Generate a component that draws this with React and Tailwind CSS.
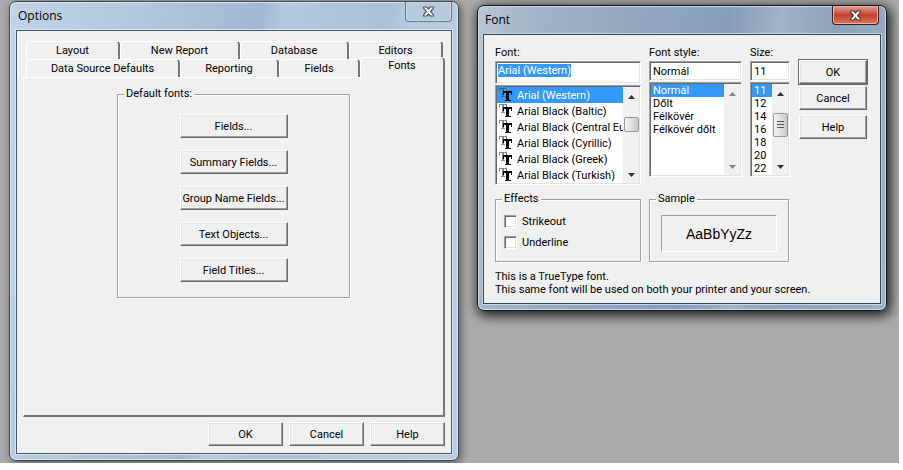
import { useEffect, useRef } from 'react';

const RAISED =
  'border border-t-white border-l-white border-r-[#696969] border-b-[#696969] shadow-[inset_-1px_-1px_0_#a0a0a0,inset_1px_1px_0_#e3e3e3]';
const SUNKEN =
  'border border-t-[#a0a0a0] border-l-[#a0a0a0] border-r-white border-b-white shadow-[inset_1px_1px_0_#696969,inset_-1px_-1px_0_#e3e3e3]';

function PushButton({ children, className = '' }) {
  return (
    <button type="button" className={`flex h-6 items-center justify-center whitespace-nowrap bg-[#f0f0f0] ${RAISED} ${className}`}>
      {children}
    </button>
  );
}

function Group({ title, className = '', children }) {
  return (
    <fieldset className={`min-w-0 border border-[#a0a0a0] shadow-[inset_1px_1px_0_#fff,1px_1px_0_#fff] ${className}`}>
      <legend className="ml-1.5 bg-[#f0f0f0] px-0.5 leading-3">{title}</legend>
      {children}
    </fieldset>
  );
}

function CloseGlyph({ outline }) {
  return (
    <svg width="13" height="11" viewBox="0 0 13 11" aria-hidden="true">
      <path
        d="M1.500 1h3.200l1.800 2 1.800-2h3.200v1.200L8.600 5.500l2.900 3.300V10H8.300L6.500 8 4.700 10H1.500V8.800L4.400 5.500 1.500 2.200Z"
        fill="#fff"
        stroke={outline}
        strokeWidth="1.200"
        strokeLinejoin="round"
      />
    </svg>
  );
}

function Tab({ children, className = '' }) {
  return (
    <button
      type="button"
      role="tab"
      aria-selected="false"
      className={`h-[18px] rounded-t-sm border-t border-l border-r-2 border-t-white border-l-white border-r-[#777] text-center leading-4 ${className}`}
    >
      {children}
    </button>
  );
}

function OptionsWindow() {
  return (
    <section
      aria-label="Options"
      className="absolute top-px left-[9px] flex h-[460px] w-[450px] flex-col rounded-[7px] border border-[#3c4650] bg-[linear-gradient(100deg,#c3d3e6_0%,#b4c8de_22%,#a3b9d1_48%,#b3c8de_52%,#a9c0d7_72%,#b5cadf_76%,#b9cde1_100%)] px-1.5 pb-1.5 shadow-[inset_0_0_0_1px_#dce8f4,2px_2px_8px_#555]"
    >
      <header className="flex h-7 shrink-0 items-start justify-between pl-0.5">
        <h1 className="pt-1.5 font-['Open_Sans',sans-serif] text-xs leading-4">Options</h1>
        <button
          type="button"
          aria-label="Close"
          className="flex h-5 w-[47px] items-center justify-center rounded-b-[4px] border border-t-0 border-[#64788e] bg-[#b7cadd] shadow-[inset_0_0_0_1px_#cbd9e7]"
        >
          <CloseGlyph outline="#4c5666" />
        </button>
      </header>
      <main className="flex flex-1 flex-col border border-[#46586e] bg-[#f0f0f0] px-1.5 pt-2.5 pb-[7px] shadow-[0_0_0_1px_#d9e6f2]">
        <div role="tablist" aria-label="Option pages" className="flex flex-col">
          <div className="flex pr-0.5 pl-[3px]">
            <Tab className="w-[94px]">Layout</Tab>
            <Tab className="w-[120px]">New Report</Tab>
            <Tab className="w-[109px]">Database</Tab>
            <Tab className="flex-1">Editors</Tab>
          </div>
          <div className="flex items-end pl-[3px]">
            <Tab className="w-[154px]">Data Source Defaults</Tab>
            <Tab className="w-[99px]">Reporting</Tab>
            <Tab className="w-[81px] border-r-0">Fields</Tab>
            <button
              type="button"
              role="tab"
              aria-selected="true"
              className="relative -mt-0.5 -mb-px h-[21px] flex-1 rounded-t-sm border-t border-r-2 border-l border-t-white border-r-[#777] border-l-white bg-[#f0f0f0] pb-1 leading-4"
            >
              Fonts
            </button>
          </div>
        </div>
        <div role="tabpanel" className="flex flex-1 justify-center border-t border-r-2 border-b-2 border-l border-t-white border-r-[#777] border-b-[#777] border-l-white pt-2.5">
          <Group title="Default fonts:" className="h-[210px] w-[233px]">
            <div className="flex flex-col items-center gap-3 pt-3.5">
              <PushButton className="w-[108px]">Fields...</PushButton>
              <PushButton className="w-[108px]">Summary Fields...</PushButton>
              <PushButton className="w-[108px]">Group Name Fields...</PushButton>
              <PushButton className="w-[108px]">Text Objects...</PushButton>
              <PushButton className="w-[108px]">Field Titles...</PushButton>
            </div>
          </Group>
        </div>
        <footer className="flex justify-end gap-1.5 pt-[5px]">
          <PushButton className="w-[75px]">OK</PushButton>
          <PushButton className="w-[75px]">Cancel</PushButton>
          <PushButton className="w-[75px]">Help</PushButton>
        </footer>
      </main>
    </section>
  );
}

function TrueTypeIcon({ selected }) {
  return (
    <svg width="13" height="14" viewBox="0 0 13 14" aria-hidden="true" shapeRendering="crispEdges" className="shrink-0">
      <path d="M0 0h8v3H7V1H5v7h1v1H2V8h1V1H1v2H0Z" fill={selected ? '#0b7f8e' : '#8a8a8a'} />
      <path d="M4 3h9v4h-1V5h-2v7h2v1H6v-1h1V5H5v2H4Z" fill="#000" />
    </svg>
  );
}

function Arrow({ down, disabled }) {
  return (
    <svg width="7" height="4" viewBox="0 0 7 4" aria-hidden="true">
      <path d={down ? 'M0 0h7L3.500 4Z' : 'M0 4h7L3.500 0Z'} fill={disabled ? '#858585' : '#333'} />
    </svg>
  );
}

function ScrollBar({ disabled, thumb, grip }) {
  return (
    <div className="flex w-4 shrink-0 flex-col items-center justify-between bg-[#f0f0f0] pt-2 pb-1.5">
      <Arrow disabled={disabled} />
      {thumb && (
        <div className={`flex w-[15px] flex-col items-center justify-center gap-px rounded-[2px] border border-[#979797] bg-linear-to-r from-[#f6f6f6] to-[#c8c8cc] ${thumb}`}>
          {grip && (
            <>
              <span className="h-px w-[7px] bg-[#555]" />
              <span className="mt-px h-px w-[7px] bg-[#555]" />
              <span className="mt-px h-px w-[7px] bg-[#555]" />
            </>
          )}
        </div>
      )}
      <Arrow down disabled={disabled} />
    </div>
  );
}

function ListBox({ label, items, icons, className = '', scroll }) {
  return (
    <div className={`flex overflow-hidden bg-white p-px ${SUNKEN} ${className}`}>
      <ul role="listbox" aria-label={label} className="min-w-0 flex-1">
        {items.map((item, i) => (
          <li
            key={item}
            role="option"
            aria-selected={i === 0}
            className={`flex items-center whitespace-nowrap ${icons ? 'h-4 gap-[5px] pl-0.5' : 'h-[13px] pl-0.5'} ${i === 0 ? 'bg-[#3399ff] text-white' : ''}`}
          >
            {icons && <TrueTypeIcon selected={i === 0} />}
            {item}
          </li>
        ))}
      </ul>
      {scroll}
    </div>
  );
}

const FONTS = [
  'Arial (Western)',
  'Arial Black (Baltic)',
  'Arial Black (Central Eu',
  'Arial Black (Cyrillic)',
  'Arial Black (Greek)',
  'Arial Black (Turkish)',
];
const STYLES = ['Normál', 'Dőlt', 'Félkövér', 'Félkövér dőlt'];
const SIZES = ['11', '12', '14', '16', '18', '20', '22'];

function CheckBox({ label }) {
  return (
    <label className="flex items-center gap-[5px]">
      <input type="checkbox" className={`size-[13px] appearance-none bg-white ${SUNKEN}`} />
      {label}
    </label>
  );
}

function FontWindow() {
  const fontName = useRef(null);
  useEffect(() => {
    fontName.current.focus();
    fontName.current.select();
  }, []);

  return (
    <section
      aria-label="Font"
      className="absolute top-[5px] left-[477px] flex h-[306px] w-[410px] flex-col rounded-[7px] border border-[#10151c] bg-[linear-gradient(100deg,#b8c6d6_0%,#a0b2c7_14%,#8fa5bd_40%,#869db8_55%,#a0b3c7_66%,#8da4bc_78%,#9db0c5_100%)] px-[5px] pb-1.5 shadow-[inset_0_0_0_1px_#cfdeeb,2px_3px_12px_2px_#222]"
    >
      <header className="flex h-7 shrink-0 items-start justify-between px-0.5">
        <h1 className="pt-1.5 font-['Open_Sans',sans-serif] text-xs leading-4">Font</h1>
        <button
          type="button"
          aria-label="Close"
          className="flex h-[19px] w-[47px] items-center justify-center rounded-b-[4px] border border-t-0 border-[#421d21] bg-linear-to-b from-[#dfa094] via-[#c5402c] via-50% to-[#d6765c] shadow-[inset_0_0_0_1px_#e8b4a8]"
        >
          <CloseGlyph outline="#5a3438" />
        </button>
      </header>
      <main className="flex flex-1 flex-col border border-[#2f4656] bg-[#f0f0f0] px-[11px] pt-3 shadow-[0_0_0_1px_#c5d6e4]">
        <div className="flex items-start">
          <div className="flex w-[146px] flex-col">
            <label htmlFor="font-name" className="h-3.5 leading-3">Font:</label>
            <input
              id="font-name"
              ref={fontName}
              defaultValue="Arial (Western)"
              className={`h-[23px] w-full bg-white px-0.5 pb-1 outline-none selection:bg-[#3399ff] selection:text-white ${SUNKEN}`}
            />
            <ListBox label="Font" items={FONTS} icons className="mt-px h-[100px]" scroll={<ScrollBar thumb="mb-6 h-[15px]" />} />
          </div>
          <div className="ml-2 flex w-[93px] flex-col">
            <label htmlFor="font-style" className="h-3.5 leading-3">Font style:</label>
            <input id="font-style" defaultValue="Normál" className={`h-5 w-full bg-white px-[3px] outline-none ${SUNKEN}`} />
            <ListBox label="Font style" items={STYLES} className="mt-px h-[95px]" scroll={<ScrollBar disabled />} />
          </div>
          <div className="ml-2 flex w-10 flex-col">
            <label htmlFor="font-size" className="h-3.5 leading-3">Size:</label>
            <input id="font-size" defaultValue="11" className={`h-5 w-full bg-white px-[3px] outline-none ${SUNKEN}`} />
            <ListBox label="Size" items={SIZES} className="mt-px h-[95px]" scroll={<ScrollBar thumb="mb-3 h-6" grip />} />
          </div>
          <div className="ml-[9px] flex w-[68px] flex-col pt-[13px]">
            <PushButton className="outline outline-[#696969]">OK</PushButton>
            <PushButton className="mt-0.5">Cancel</PushButton>
            <PushButton className="mt-[5px]">Help</PushButton>
          </div>
        </div>
        <div className="mt-2 flex gap-2">
          <Group title="Effects" className="h-[69px] w-[146px]">
            <div className="flex flex-col gap-2 pt-2.5 pl-2">
              <CheckBox label="Strikeout" />
              <CheckBox label="Underline" />
            </div>
          </Group>
          <Group title="Sample" className="h-[69px] w-[140px]">
            <div className="mx-[11px] mt-2.5 flex h-[37px] items-center justify-center border border-t-[#a0a0a0] border-r-white border-b-white border-l-[#a0a0a0] font-['Liberation_Sans',Arial,sans-serif] text-sm">
              AaBbYyZz
            </div>
          </Group>
        </div>
        <p className="mt-2 leading-[13px]">
          This is a TrueType font.
          <br />
          This same font will be used on both your printer and your screen.
        </p>
      </main>
    </section>
  );
}

export default function App() {
  return (
    <div className="h-screen bg-white pr-1 pb-[7px] font-['Roboto','Liberation_Sans',sans-serif] text-[11px] leading-[13px] text-black">
      <div className="relative h-full overflow-hidden bg-[#ababab]">
        <OptionsWindow />
        <FontWindow />
      </div>
    </div>
  );
}
